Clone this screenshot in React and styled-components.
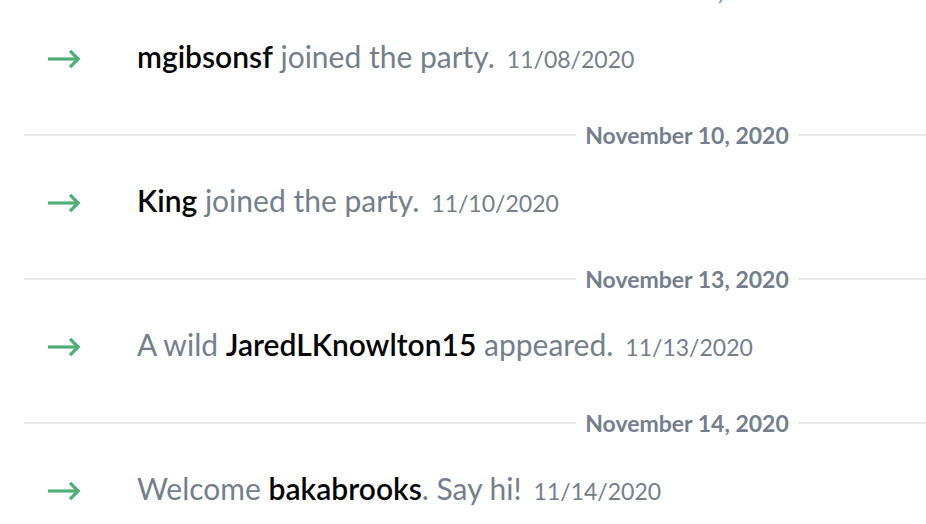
import React from 'react';
import styled, { createGlobalStyle } from 'styled-components';

const events = [
  { key: 0, date: 'November 8, 2020' },
  { key: 1, parts: [['name', 'mgibsonsf'], ['text', ' joined the party.']], time: '11/08/2020' },
  { key: 2, date: 'November 10, 2020' },
  { key: 3, parts: [['name', 'King'], ['text', ' joined the party.']], time: '11/10/2020' },
  { key: 4, date: 'November 13, 2020' },
  { key: 5, parts: [['text', 'A wild '], ['name', 'JaredLKnowlton15'], ['text', ' appeared.']], time: '11/13/2020' },
  { key: 6, date: 'November 14, 2020' },
  { key: 7, parts: [['text', 'Welcome '], ['name', 'bakabrooks'], ['text', '. Say hi!']], time: '11/14/2020' },
];

const GlobalStyle = createGlobalStyle`
  html, body {
    margin: 0;
    background: #ffffff;
    overflow: hidden;
  }
  body {
    font-family: Lato, "Noto Sans", "Liberation Sans", sans-serif;
  }
`;

const Feed = styled.div`
  display: flex;
  flex-direction: column;
  margin-top: -17px;
`;

const Divider = styled.div`
  display: flex;
  align-items: center;
  width: 1326px;
  margin-left: 24px;
  height: 16px;
`;

const Line = styled.div`
  flex: 1;
  height: 2px;
  background: #e8e9eb;
`;

const DateLabel = styled.span`
  padding: 0 9px;
  font-size: 23px;
  font-weight: 700;
  color: #747f8d;
  white-space: nowrap;
`;

const Row = styled.div`
  box-sizing: border-box;
  display: flex;
  align-items: center;
  height: 128px;
  padding: 0 0 12px 48px;
`;

const ArrowBox = styled.div`
  width: 89px;
  flex: 0 0 89px;
  display: flex;
  align-items: center;
  margin-top: 4px;
  color: #4fae7a;
`;

const Message = styled.div`
  display: flex;
  align-items: baseline;
  margin-bottom: 2px;
  font-size: 30px;
  color: #747f8d;
  white-space: pre;
`;

const Name = styled.span`
  color: #060607;
  font-weight: 600;
`;

const Time = styled.span`
  margin-left: 12px;
  font-size: 23px;
  color: #747f8d;
`;

function Arrow() {
  return (
    <svg width="33" height="20" viewBox="0 0 33 20" fill="none">
      <path d="M0 10H30" stroke="currentColor" strokeWidth="3.2" />
      <path d="M22 1.8L30.2 10L22 18.2" stroke="currentColor" strokeWidth="3.2" />
    </svg>
  );
}

export default function App() {
  return (
    <>
      <GlobalStyle />
      <Feed>
        {events.map((ev) =>
          ev.date ? (
            <Divider key={ev.key}>
              <Line />
              <DateLabel>{ev.date}</DateLabel>
              <Line />
            </Divider>
          ) : (
            <Row key={ev.key}>
              <ArrowBox>
                <Arrow />
              </ArrowBox>
              <Message>
                {ev.parts.map(([kind, text], i) =>
                  kind === 'name' ? <Name key={i}>{text}</Name> : <span key={i}>{text}</span>
                )}
                <Time>{ev.time}</Time>
              </Message>
            </Row>
          )
        )}
      </Feed>
    </>
  );
}
